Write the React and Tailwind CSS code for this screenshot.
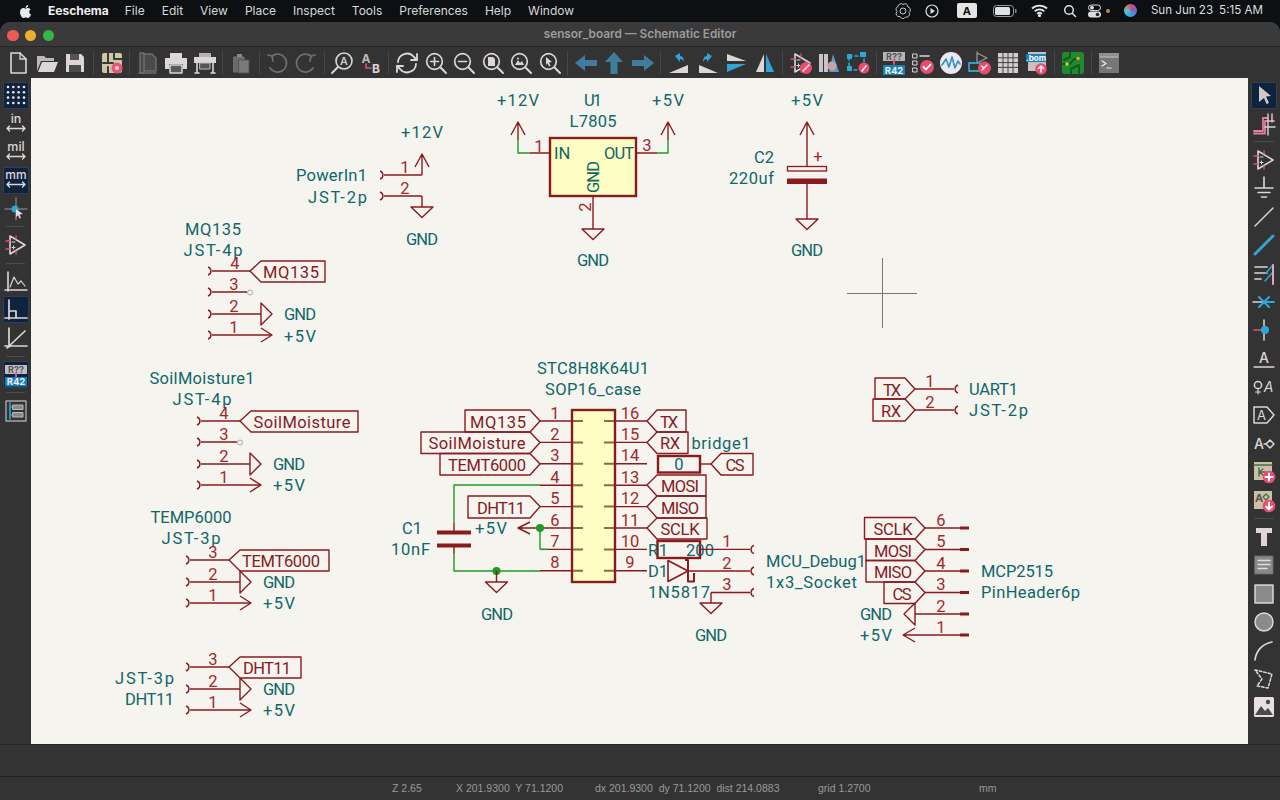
import React from 'react';
import { FaApple } from 'react-icons/fa';

const RED = '#8a1a1e', NUM = '#a3282c', TEAL = '#0f6767', GRN = '#1f9a22';
const LT = '#dcd6d9', BL = '#2fa6d6', PK = '#e84d70', GY = '#6e6e6e', ST = '#3f7c9e';

const LEN = {
  MQ135: 56, SoilMoisture: 97, TEMT6000: 78, DHT11: 48, TX: 18, RX: 20, MOSI: 38, MISO: 38, SCLK: 39, CS: 19,
  GND: 32, '+5V': 32, '+12V': 42, U1: 18, L7805: 47, OUT: 30, C1: 20, C2: 20, R1: 20, D1: 20, 200: 28,
  'JST-4p': 59, 'JST-3p': 59,
};

const P = ({ d, c = RED, w = 1.4, f = 'none' }) => <path d={d} stroke={c} strokeWidth={w} fill={f} strokeLinejoin="round" />;
const T = ({ x, y, t, a = 'middle', c = TEAL, len, rot }) => {
  const L = len || LEN[t];
  return (
    <text x={x} y={y} textAnchor={a} dominantBaseline="central" fill={c} textLength={L} lengthAdjust={L ? 'spacing' : undefined}
      transform={rot ? `rotate(${rot} ${x} ${y})` : undefined}
      className="font-['Roboto'] text-[16.5px]">{t}</text>
  );
};
const N = ({ x, y, t }) => <T x={x} y={y} t={t} c={NUM} />;
const Lb = ({ x, y, t }) => <T x={x} y={y} t={t} c="#861a1e" />;
const Gnd = ({ x, y }) => <P d={`M${x - 11} ${y}H${x + 11}L${x} ${y + 10.5}Z`} />;
const Up = ({ x, y, to }) => <P d={`M${x} ${to}V${y}M${x - 7} ${y + 13}L${x} ${y}L${x + 7} ${y + 13}`} />;
const SockL = ({ x, y, to, n, nx }) => (
  <>
    <P d={`M${x} ${y - 4}A4.2 4.2 0 0 1 ${x} ${y + 4}M${x + 4} ${y}H${to}`} />
    <N x={nx} y={y - 8} t={n} />
  </>
);
const SockR = ({ x, y, from, n, nx }) => (
  <>
    <P d={`M${x} ${y - 4}A4.2 4.2 0 0 0 ${x} ${y + 4}M${x - 4} ${y}H${from}`} />
    <N x={nx} y={y - 8} t={n} />
  </>
);
const GndR = ({ x, y }) => <P d={`M${x} ${y - 11}L${x + 11} ${y}L${x} ${y + 11}Z`} />;
const ArrR = ({ x, y }) => <P d={`M${x - 11} ${y - 7}L${x} ${y}L${x - 11} ${y + 7}`} />;

function Schematic() {
  const ys = [421, 442.4, 463.8, 485.2, 506.6, 528, 549.4, 570.8];
  const ln = ['1', '2', '3', '4', '5', '6', '7', '8'];
  const rn = ['16', '15', '14', '13', '12', '11', '10', '9'];
  return (
    <svg viewBox="31 78 1217 666" className="block w-full h-full">
      <defs>
        <pattern id="griddots" x="35" y="121" width="32" height="107" patternUnits="userSpaceOnUse">
          <rect width="1.5" height="1.5" fill="#ecebe4" />
        </pattern>
      </defs>
      <rect x="31" y="78" width="1217" height="666" fill="url(#griddots)" />

      {/* cursor */}
      <P d="M847 293.5H917M882.5 258V328" c="#777774" w={1} />

      {/* PowerIn1 */}
      <T x={367} y={175} a="end" t="PowerIn1" len={71} />
      <T x={367} y={197} a="end" t="JST-2p" len={59} />
      <SockL x={380} y={175} to={422} n="1" nx={405} />
      <SockL x={380} y={196} to={422} n="2" nx={405} />
      <Up x={422} y={154} to={175} />
      <P d="M422 196V207" />
      <Gnd x={422} y={207} />
      <T x={422} y={132} t="+12V" />
      <T x={422} y={239} t="GND" />

      {/* U1 */}
      <rect x="550" y="138" width="86" height="58" fill="#fdfdc4" stroke={RED} strokeWidth="2.4" />
      <T x={593} y={100} t="U1" />
      <T x={593} y={121} t="L7805" />
      <T x={554} y={153} a="start" t="IN" />
      <T x={634} y={153} a="end" t="OUT" />
      <T x={593} y={177} t="GND" rot={-90} />
      <P d="M530 153H550M636 153H657" />
      <P d="M530 153H518V140M657 153H668V140" c={GRN} />
      <Up x={518} y={122} to={140} />
      <Up x={668} y={122} to={140} />
      <N x={539} y={146} t="1" />
      <N x={647} y={145} t="3" />
      <T x={518} y={100} t="+12V" />
      <T x={668} y={100} t="+5V" />
      <P d="M593 196V229" />
      <T x={585} y={207} t="2" c={NUM} rot={-90} />
      <Gnd x={593} y={229} />
      <T x={593} y={260} t="GND" />

      {/* C2 */}
      <T x={807} y={100} t="+5V" />
      <Up x={807} y={122} to={166} />
      <rect x="787.5" y="166.5" width="39" height="4.5" fill="#f5f4ef" stroke={RED} strokeWidth="1.3" />
      <rect x="787" y="178.5" width="40" height="5.5" fill={RED} />
      <T x={818} y={156} t="+" c={NUM} />
      <P d="M807 184V219" />
      <Gnd x={807} y={219} />
      <T x={807} y={250} t="GND" />
      <T x={774} y={157} a="end" t="C2" />
      <T x={774} y={178} a="end" t="220uf" len={45} />

      {/* MQ135 */}
      <T x={213} y={229} t="MQ135" />
      <T x={213} y={250} t="JST-4p" />
      <SockL x={208} y={271} to={250} n="4" nx={235} />
      <SockL x={208} y={292} to={247} n="3" nx={234} />
      <circle cx="250" cy="292.5" r="2.5" fill="none" stroke="#a8a8a0" strokeWidth="1" />
      <SockL x={208} y={314} to={261} n="2" nx={234} />
      <SockL x={208} y={335} to={272} n="1" nx={234} />
      <P d="M250 271L261 261H325V282H261Z" />
      <Lb x={291} y={272} t="MQ135" />
      <GndR x={261} y={314} />
      <ArrR x={272} y={335} />
      <T x={300} y={314} t="GND" />
      <T x={300} y={336} t="+5V" />

      {/* SoilMoisture */}
      <T x={202} y={378} t="SoilMoisture1" len={105} />
      <T x={202} y={399} t="JST-4p" />
      <SockL x={197} y={421} to={240} n="4" nx={224} />
      <SockL x={197} y={442} to={237} n="3" nx={224} />
      <circle cx="240" cy="442.5" r="2.5" fill="none" stroke="#a8a8a0" strokeWidth="1" />
      <SockL x={197} y={464} to={250} n="2" nx={224} />
      <SockL x={197} y={485} to={261} n="1" nx={224} />
      <P d="M240 421L251 411H358V432H251Z" />
      <Lb x={302} y={422} t="SoilMoisture" />
      <GndR x={250} y={464} />
      <ArrR x={261} y={485} />
      <T x={289} y={464} t="GND" />
      <T x={289} y={485} t="+5V" />

      {/* TEMP6000 */}
      <T x={191} y={517} t="TEMP6000" len={81} />
      <T x={191} y={538} t="JST-3p" />
      <SockL x={186} y={560} to={229} n="3" nx={213} />
      <SockL x={186} y={582} to={240} n="2" nx={213} />
      <SockL x={186} y={603} to={251} n="1" nx={213} />
      <P d="M229 560L240 550H329V571H240Z" />
      <Lb x={281} y={561} t="TEMT6000" />
      <GndR x={240} y={582} />
      <ArrR x={251} y={603} />
      <T x={279} y={582} t="GND" />
      <T x={279} y={603} t="+5V" />

      {/* DHT11 */}
      <T x={174} y={678} a="end" t="JST-3p" />
      <T x={174} y={699} a="end" t="DHT11" len={49} />
      <SockL x={186} y={667} to={229} n="3" nx={213} />
      <SockL x={186} y={689} to={240} n="2" nx={213} />
      <SockL x={186} y={710} to={251} n="1" nx={213} />
      <P d="M229 667L240 657H301V678H240Z" />
      <Lb x={267} y={668} t="DHT11" />
      <GndR x={240} y={689} />
      <ArrR x={251} y={710} />
      <T x={279} y={689} t="GND" />
      <T x={279} y={710} t="+5V" />

      {/* MCU */}
      <T x={593} y={368} t="STC8H8K64U1" len={112} />
      <T x={593} y={389} t="SOP16_case" len={96} />
      <rect x="572" y="410" width="43" height="172" fill="#fdfdc4" stroke={RED} strokeWidth="2.4" />
      {ys.map((y, i) => (
        <g key={i}>
          <P d={`M540 ${y}H572M615 ${y}H647`} />
          <P d={`M573 ${y}H583M604 ${y}H614`} c="#8b6a45" w={2} />
          <N x={555} y={y - 8} t={ln[i]} />
          <N x={630} y={y - 8} t={rn[i]} />
        </g>
      ))}
      {/* left labels */}
      <P d="M540 421L530 410H465V432H530Z" />
      <Lb x={498} y={422} t="MQ135" />
      <P d="M540 442.5L530 432H421V453.5H530Z" />
      <Lb x={477} y={443.5} t="SoilMoisture" />
      <P d="M540 464L530 453.5H440V475H530Z" />
      <Lb x={487} y={465} t="TEMT6000" />
      <P d="M540 506.6L530 496H468V518H530Z" />
      <Lb x={501} y={508} t="DHT11" />
      {/* right labels */}
      <P d="M647 421L657 410H686V432H657Z" />
      <Lb x={669} y={422} t="TX" />
      <P d="M647 442.5L657 432H688V453.5H657Z" />
      <Lb x={670} y={443.5} t="RX" />
      <T x={721} y={443} t="bridge1" len={59} />
      <rect x="658" y="456" width="42" height="16.5" fill="none" stroke={RED} strokeWidth="2.4" />
      <T x={679} y={464.5} t="0" />
      <P d="M700 464H711" />
      <P d="M711 464L721 453.5H753V475H721Z" />
      <Lb x={735} y={465} t="CS" />
      <P d="M647 485L657 475H706V496H657Z" />
      <Lb x={680} y={486.5} t="MOSI" />
      <P d="M647 506.6L657 496H706V518H657Z" />
      <Lb x={680} y={508} t="MISO" />
      <P d="M647 528L657 518H707V539H657Z" />
      <Lb x={680} y={529} t="SCLK" />

      {/* C1 */}
      <P d="M540 485H454V523M454 554V571H540" c={GRN} />
      <P d="M454 523V532M454 545V554" />
      <P d="M437 532.5H471M437 545.5H471" w={4} />
      <T x={422} y={528} a="end" t="C1" />
      <T x={430} y={549} a="end" t="10nF" len={39} />
      <circle cx="496.5" cy="571" r="4" fill={GRN} />
      <P d="M496.5 571V582" />
      <Gnd x={496.5} y={582} />
      <T x={497} y={614} t="GND" />
      <P d="M530 522L518 528L530 534M518 528H540" />
      <P d="M540 528V549.4" c={GRN} />
      <circle cx="540" cy="528" r="4" fill={GRN} />
      <P d="M540 549.4H548" c={GRN} />
      <T x={491} y={528} t="+5V" />

      {/* R1 D1 socket */}
      <rect x="657.5" y="541" width="42.5" height="17" fill="none" stroke={RED} strokeWidth="2.4" />
      <T x={658} y={550} t="R1" />
      <T x={700} y={550} t="200" />
      <SockR x={754} y={549.4} from={700} n="1" nx={727} />
      <P d="M668 560.5V581.5L688 571Z" w={1.6} />
      <P d="M685 560H688V581.5H694V573" w={2} />
      <SockR x={754} y={571} from={688} n="2" nx={727} />
      <T x={658} y={571} t="D1" />
      <T x={679} y={592} t="1N5817" len={62} />
      <SockR x={754} y={592.5} from={711} n="3" nx={727} />
      <P d="M711 592.5V603" />
      <Gnd x={711} y={603} />
      <T x={711} y={635} t="GND" />
      <T x={766} y={561} a="start" t="MCU_Debug1" len={100} />
      <T x={766} y={582} a="start" t="1x3_Socket" len={91} />

      {/* UART */}
      <P d="M915 389L905 378H875V399H905Z" />
      <Lb x={892} y={390} t="TX" />
      <P d="M915 410L905 399H873V421H905Z" />
      <Lb x={891} y={411} t="RX" />
      <SockR x={958} y={389} from={915} n="1" nx={930} />
      <SockR x={958} y={410} from={915} n="2" nx={930} />
      <T x={969} y={389} a="start" t="UART1" len={49} />
      <T x={969} y={410} a="start" t="JST-2p" len={59} />

      {/* MCP2515 */}
      <P d="M925 528L915 517.5H864.5V539H915Z" />
      <Lb x={893} y={529.5} t="SCLK" />
      <P d="M925 549.5L915 539H866V560.5H915Z" />
      <Lb x={893} y={551} t="MOSI" />
      <P d="M925 571L915 560.5H866V582H915Z" />
      <Lb x={893} y={572.5} t="MISO" />
      <P d="M925 592.5L915 582H884V603.5H915Z" />
      <Lb x={902} y={594} t="CS" />
      <P d="M915 603L904 614L915 625Z" />
      <P d="M915 628L903 635L915 642M903 635H960" />
      <P d="M925 528H960M925 549.5H960M925 571H960M925 592.5H960M915 614H960" />
      <P d="M960 528H969M960 549.5H969M960 571H969M960 592.5H969M960 614H969M960 635H969" w={3} />
      {[['6', 520], ['5', 541], ['4', 563], ['3', 584], ['2', 606], ['1', 627]].map(([n, y]) => (
        <N key={n} x={941} y={y} t={n} />
      ))}
      <T x={876} y={614} t="GND" />
      <T x={876} y={635} t="+5V" />
      <T x={981} y={571} a="start" t="MCP2515" len={72} />
      <T x={981} y={592} a="start" t="PinHeader6p" len={99} />
    </svg>
  );
}

/* ---------- toolbar icons ---------- */
const S = ({ children, s = 24 }) => (
  <svg viewBox="0 0 24 24" width={s} height={s} fill="none" strokeLinecap="round" strokeLinejoin="round" className="overflow-visible">{children}</svg>
);
const Mag = ({ children }) => (
  <S>
    <circle cx="10.5" cy="10.5" r="7.8" stroke={LT} strokeWidth="1.7" />
    <path d="M16.3 16.3L22 22" stroke={LT} strokeWidth="2" />
    {children}
  </S>
);
const Tx = ({ x, y, t, size = 9, fill = LT, w = 700 }) => (
  <text x={x} y={y} textAnchor="middle" fill={fill} fontSize={size} fontWeight={w} fontFamily="Inter, sans-serif">{t}</text>
);
const Opamp = () => (
  <>
    <path d="M6 3V21L21 12Z" stroke={LT} strokeWidth="1.6" />
    <path d="M2 8H6M2 16H6M12 6V3M12 21V18" stroke={PK} strokeWidth="1.3" />
    <path d="M8 9h3M9.5 13v3M8 14.5h3" stroke={LT} strokeWidth="1" />
  </>
);

const top = [
  [
    <S><path d="M5 2H14L20 8V22H5Z" fill="#3b3b3b" stroke={LT} strokeWidth="1.6" /><path d="M14 2V8H20" stroke={LT} strokeWidth="1.3" /></S>,
    <S><path d="M2 20V5H9L11 7H19V10H6L2 20Z" fill="#bdb6ba" /><path d="M3 21L7 11H23L19 21Z" fill={LT} /></S>,
    <S><path d="M3 3H18L21 6V21H3Z" fill={LT} /><path d="M7 3H16V9H7Z" fill="#555" /><path d="M6 14H18V21H6Z" fill="#4a4a4a" /></S>,
  ],
  [
    <S><rect x="2" y="2" width="20" height="20" rx="2" fill="#cfc5ac" /><path d="M8 2V12H3M14 2V8H22M8 16V22M8 12H13" stroke="#3a3a34" strokeWidth="2" /><circle cx="17" cy="17" r="5.5" fill="#e8557a" /><circle cx="17" cy="17" r="2" fill="#f5d9e0" /></S>,
  ],
  [
    <S><path d="M4 2H8V22H4ZM8 3H16L20 7V20H8" stroke={GY} strokeWidth="1.5" fill="#4a4a4a" /><path d="M3 22H20" stroke={GY} strokeWidth="1.3" /></S>,
    <S><path d="M6 2H18V7H6Z" fill={LT} /><path d="M1 7H23V18H19V13H5V18H1Z" fill={LT} /><path d="M6 14H18V22H6Z" fill="#5a5a5a" stroke={LT} strokeWidth="1.5" /></S>,
    <S><path d="M6 2H18V6H6Z" fill="#b8b3b5" /><path d="M1 6H23V12H1Z" fill={LT} /><path d="M4 12V22M20 12V22M2 22H6M18 22H22" stroke={LT} strokeWidth="1.6" /><path d="M7 12H17V18H7Z" fill="#555" stroke="#bbb" /></S>,
  ],
  [
    <S><path d="M5 6H15V21H5Z" fill="#6a6a6a" stroke="#777" /><path d="M10 9H20V22H10Z" fill="#7a7a7a" stroke="#555" /><path d="M8 3H13V6H8Z" fill="#8a8a8a" /></S>,
  ],
  [
    <S><path d="M7 5A9 9 0 1 1 5 17" stroke={GY} strokeWidth="1.8" /><path d="M3 4L7 5L8 10" stroke={GY} strokeWidth="1.8" /></S>,
    <S><path d="M17 5A9 9 0 1 0 19 17" stroke={GY} strokeWidth="1.8" /><path d="M21 4L17 5L16 10" stroke={GY} strokeWidth="1.8" /></S>,
  ],
  [
    <S><circle cx="14" cy="10" r="8" stroke={LT} strokeWidth="1.6" /><path d="M8 16L2 22" stroke={LT} strokeWidth="2" /><Tx x={14} y={14} t="A" size={11} w={500} /></S>,
    <S><Tx x={7} y={12} t="A" size={12} fill="#bdb6ba" /><Tx x={17} y={22} t="B" size={12} /><path d="M7 13V17H12" stroke={PK} strokeWidth="1.7" /></S>,
  ],
  [
    <S><path d="M3 11A9 9 0 0 1 19 6L22 9M21 13A9 9 0 0 1 5 18L2 15" stroke={LT} strokeWidth="1.8" /><path d="M22 3V9H16M2 21V15H8" stroke={LT} strokeWidth="1.8" /></S>,
    <Mag><path d="M6.5 10.5H14.5M10.5 6.5V14.5" stroke={LT} strokeWidth="1.6" /></Mag>,
    <Mag><path d="M6.5 10.5H14.5" stroke={LT} strokeWidth="1.6" /></Mag>,
    <Mag><path d="M7 6H12L14 8V15H7Z" fill={LT} /></Mag>,
    <Mag><path d="M6 14L9 9L11 12L13 10L15 14Z" fill={LT} /><circle cx="9" cy="7.5" r="1" fill={LT} /></Mag>,
    <Mag><path d="M8 6L14 11L11 11.5L12.5 15L11 15.6L9.6 12.3L8 14Z" fill={LT} /></Mag>,
  ],
  [
    <S><path d="M1 12L11 4V9H23V15H11V20Z" fill={ST} /></S>,
    <S><path d="M12 1L21 11H15.5V23H8.5V11H3Z" fill={ST} /></S>,
    <S><path d="M23 12L13 4V9H1V15H13V20Z" fill={ST} /></S>,
  ],
  [
    <S><path d="M2 22L21 14V22Z" fill={LT} /><path d="M8 5L13 2V5C16 5 17 8 17 11C16 9 15 8 13 8V11Z" fill={BL} /></S>,
    <S><path d="M22 22L3 14V22Z" fill={LT} /><path d="M16 5L11 2V5C8 5 7 8 7 11C8 9 9 8 11 8V11Z" fill={BL} /></S>,
    <S><path d="M3 3L22 10H3Z" fill={LT} /><path d="M3 13H22L3 21Z" fill={BL} /></S>,
    <S><path d="M11 3L3 21H11Z" fill={LT} /><path d="M13 3L21 21H13Z" fill={BL} /></S>,
  ],
  [
    <S><Opamp /><circle cx="17" cy="17" r="6" fill={PK} /><path d="M14 20L20 14" stroke="#f6dfe5" strokeWidth="1.6" /></S>,
    <S><path d="M2 3H6V21H2ZM7 3H11V21H7Z" fill="#c9c2c6" /><path d="M12 21L16 3L22 21Z" fill="#5a9cc0" /><circle cx="15" cy="15" r="4.5" fill="#c9a0ae" /></S>,
    <S><rect x="3" y="5" width="15" height="14" stroke={BL} strokeWidth="1.6" strokeDasharray="3 3" /><rect x="1" y="3" width="5" height="5" fill={BL} /><rect x="1" y="15" width="5" height="5" fill={BL} /><rect x="14" y="1" width="6" height="5" fill={BL} /><circle cx="18" cy="17" r="5.5" fill={PK} /><path d="M16 20L20 15" stroke="#fff" strokeWidth="1.4" /></S>,
  ],
  [
    <S><rect x="1" y="1" width="22" height="9" fill="#b9b3b6" /><Tx x={12} y={8.5} t="R??" size={9} fill="#555" /><path d="M12 10V13" stroke={PK} strokeWidth="2" /><rect x="1" y="14" width="22" height="10" fill="#1b7fb0" /><Tx x={12} y={22.5} t="R42" size={9.5} fill="#e8f3f8" /></S>,
    <S><path d="M2 3h4v4H2zM2 10h4v4H2zM2 17h4v4H2z" stroke={LT} strokeWidth="1" /><path d="M9 5H18" stroke={LT} strokeWidth="1.5" /><circle cx="16" cy="16" r="7" fill={PK} /><path d="M12.5 16L15 18.5L19.5 13.5" stroke="#fff" strokeWidth="1.8" /></S>,
    <S><circle cx="12" cy="12" r="11" fill="#e9eaee" /><path d="M3 14L7 8L10 16L13 6L16 17L19 10L21 13" stroke="#3d8fc4" strokeWidth="1.7" /></S>,
    <S><path d="M9 1V12M9 2L19 7L9 12" stroke="#9a9a9a" strokeWidth="1.3" /><rect x="1" y="12" width="11" height="8" stroke={BL} strokeWidth="1.8" strokeDasharray="2 1.5" /><circle cx="16.5" cy="17" r="6.5" fill={PK} /><path d="M14 19L19 14M13.5 15L16 17" stroke="#fff" strokeWidth="1.2" /></S>,
    <S><rect x="2" y="2" width="20" height="20" fill="#d3cdd0" /><path d="M2 6.8H22M2 11.6H22M2 16.4H22M7 2V22M12 2V22M17 2V22" stroke="#444" strokeWidth="1" /></S>,
    <S><path d="M3 1H21V20H3Z" fill="#c7c1c4" /><rect x="1" y="3" width="20" height="8" fill="#1b7fb0" /><Tx x={11} y={10} t=".bom" size={8} fill="#fff" /><circle cx="16" cy="18" r="5.8" fill={PK} /><path d="M16 21V15M13.5 17.5L16 15L18.5 17.5" stroke="#fff" strokeWidth="1.5" /></S>,
  ],
  [
    <S><rect x="1" y="1" width="22" height="22" rx="3" fill="#1f8a30" /><path d="M2 13H9L13 8H16M10 23V18L18 14V23M9 1V6L3 9" stroke="#0f5c1c" strokeWidth="2" /><circle cx="6" cy="13" r="1.7" fill="#f0c040" /><circle cx="17" cy="7.5" r="1.7" fill="#f0a030" /></S>,
  ],
  [
    <S><rect x="2" y="2" width="20" height="20" fill="#777" /><rect x="2" y="2" width="20" height="3.4" fill="#8f8f8f" /><path d="M3 6H21" stroke="#ddd" strokeWidth=".8" /><path d="M5 10L9 12.5L5 15M10 17H14" stroke="#eee" strokeWidth="1.2" /></S>,
  ],
];

const Unit = ({ t }) => (
  <S>
    <Tx x={12} y={11} t={t} size={t === 'mm' ? 12 : 12.5} w={500} />
    <path d="M3 16.5H21M5.5 14L3 16.5L5.5 19M18.5 14L21 16.5L18.5 19" stroke={LT} strokeWidth="1.4" />
  </S>
);

const left = [
  [
    { sel: true, i: <S><g fill="#e8e8ee">{[4, 9.3, 14.6, 20].flatMap((y) => [4, 9.3, 14.6, 20].map((x) => <circle key={`${x}-${y}`} cx={x} cy={y} r="1.3" />))}</g></S> },
    { i: <Unit t="in" /> },
    { i: <Unit t="mil" /> },
    { sel: true, i: <Unit t="mm" /> },
    { i: <S><path d="M1 12H23M12 1V23" stroke="#9a9a9a" strokeWidth="1" /><circle cx="11" cy="12" r="3.5" fill={BL} /><path d="M12 12L19 17L15.5 17.5L17 21L15.5 21.6L14 18.2L12 20Z" fill="#e8dce2" /></S> },
  ],
  [{ i: <S><Opamp /></S> }],
  [
    { i: <S><path d="M4 2V21M1 20H23" stroke={LT} strokeWidth="1.6" /><path d="M6 17L10 7L14 14L17 11L21 16" stroke={LT} strokeWidth="1.2" /></S> },
    { sel: true, i: <S><path d="M5 2V21M1 20H23M5 13H12V20" stroke={LT} strokeWidth="1.7" /></S> },
    { i: <S><path d="M5 2V21M1 20H23M3 22L21 5" stroke={LT} strokeWidth="1.7" /></S> },
  ],
  [{ sel: true, i: <S><rect x="1" y="2" width="22" height="9" fill="#c4bcc2" /><Tx x={12} y={9.5} t="R??" size={9} fill="#555" /><path d="M12 11V14" stroke={PK} strokeWidth="2" /><rect x="1" y="14" width="22" height="9.5" fill="#1b7fb0" /><Tx x={12} y={22} t="R42" size={9.5} fill="#eef" /></S> }],
  [{ i: <S><rect x="2" y="2" width="20" height="20" stroke="#a9a5a7" strokeWidth="1.4" /><path d="M6 4V20" stroke={BL} strokeWidth="1.6" /><path d="M6 8H9M6 16H9" stroke={BL} strokeWidth="1.2" /><rect x="9" y="6" width="10" height="4.5" fill="#888" stroke="#bbb" /><rect x="9" y="13.5" width="10" height="4.5" fill="#888" stroke="#bbb" /></S> }],
];

const right = [
  [
    { sel: true, i: <S><path d="M7 3L19 13L14 13.6L17 20L14.5 21L12 15L7 19Z" fill="#cfc8cc" /></S> },
    { i: <S><path d="M2 19H11V6H15M2 21.5H13V9H22" stroke="#e27ea0" strokeWidth="1.8" /><path d="M13 15H23M16 2V23M20 2V10" stroke={LT} strokeWidth="1.4" /></S> },
  ],
  [
    { i: <S><Opamp /></S> },
    { i: <S><path d="M12 1V12M3 12H21M6 16.5H18M9.5 21H14.5" stroke={LT} strokeWidth="1.6" /></S> },
    { i: <S><path d="M3 21L21 3" stroke={LT} strokeWidth="1.5" /></S> },
    { i: <S><path d="M3 21L21 3" stroke={BL} strokeWidth="3" /></S> },
    { i: <S><path d="M3 5H15M3 11H15M3 17H9" stroke={LT} strokeWidth="1.7" /><path d="M21 3L14 11M21 10L13 19" stroke={BL} strokeWidth="1.5" /><path d="M21 3V22" stroke="#e2a5bb" strokeWidth="2" /></S> },
    { i: <S><path d="M1 12H13" stroke={LT} strokeWidth="1.5" /><path d="M7 7L17 17M17 7L7 17M14 12H22" stroke={BL} strokeWidth="2" /></S> },
    { i: <S><path d="M12 2V22" stroke={LT} strokeWidth="1.5" /><path d="M2 12H12" stroke={PK} strokeWidth="1.5" /><circle cx="13" cy="12" r="4" fill={BL} /></S> },
    { i: <S><Tx x={12} y={16} t="A" size={14} w={500} /><path d="M2 20H22" stroke={LT} strokeWidth="1.4" /></S> },
    { i: <S><circle cx="6" cy="10" r="3.6" stroke={LT} strokeWidth="1.5" /><path d="M6 14V19M3.5 17H8.5" stroke={LT} strokeWidth="1.2" /><text x="16.5" y="17" textAnchor="middle" fill={LT} fontSize="14" fontStyle="italic" fontFamily="Inter, sans-serif">A</text></S> },
    { i: <S><path d="M2 4H15L22 12L15 20H2Z" stroke={LT} strokeWidth="1.5" /><Tx x={9.5} y={17} t="A" size={13} w={400} /></S> },
    { i: <S><Tx x={7} y={17} t="A" size={14} w={500} /><path d="M14 12L18 8L22 12L18 16Z" stroke={LT} strokeWidth="1.5" /><path d="M12 12H14" stroke={LT} strokeWidth="1.5" /></S> },
    { i: <S><rect x="2" y="2" width="18" height="18" fill="#c9c0a8" /><path d="M2 5H20M7 8V16M7 12H14M11 9L7 12L11 15" stroke="#4a6a4a" strokeWidth="1.4" /><circle cx="17" cy="17" r="6.3" fill={PK} /><path d="M17 13.5V20.5M13.5 17H20.5" stroke="#fff" strokeWidth="2" /></S> },
    { i: <S><rect x="2" y="2" width="18" height="18" fill="#c9c0a8" /><Tx x={7} y={13} t="A" size={11} fill="#55554a" /><path d="M14 5L17 8L14 11L11 8Z" stroke="#4a6a4a" strokeWidth="1.3" /><circle cx="17" cy="17" r="6.3" fill={PK} /><path d="M17 13.5V20M14 17.5L17 20.5L20 17.5" stroke="#fff" strokeWidth="1.8" /></S> },
  ],
  [
    { i: <S><path d="M4 3H20V8H15V21H9V8H4Z" fill={LT} /></S> },
    { i: <S><rect x="3" y="3" width="18" height="18" fill="#888" stroke="#6b6b6b" /><path d="M6 7.5H18M6 11.5H18M6 15.5H15" stroke="#ddd" strokeWidth="1.4" /></S> },
    { i: <S><rect x="3" y="3" width="18" height="18" fill="#8a8a8a" stroke={LT} strokeWidth="1.5" /></S> },
    { i: <S><circle cx="12" cy="12" r="9" fill="#8a8a8a" stroke={LT} strokeWidth="1.5" /></S> },
    { i: <S><path d="M3 21C4 12 10 5 20 3" stroke={LT} strokeWidth="1.7" /></S> },
    { i: <S><path d="M3 3L20 7L16 21L5 19L10 12Z" stroke={LT} strokeWidth="1.5" strokeDasharray="2.5 2" /></S> },
    { i: <S><rect x="2" y="2" width="20" height="20" rx="1.5" fill="#e8dfe6" /><path d="M3 20L9 11L13 16L16 13L21 20Z" fill="#4a4a4a" /><circle cx="16" cy="7" r="2.2" fill="#4a4a4a" /></S> },
  ],
];

const VTool = ({ groups, cls, sepCls }) => (
  <div className={`flex flex-col shrink-0 bg-[#333333] pt-[3px] ${cls}`}>
    {groups.map((g, gi) => (
      <React.Fragment key={gi}>
        {gi > 0 && <div className={`h-[8px] flex items-center shrink-0 ${sepCls}`}><div className="w-full h-px bg-[#4a4a4a]" /></div>}
        {g.map((b, i) => (
          <div key={i} className="h-[28.4px] shrink-0 flex items-center justify-center">
            <div className={`w-[26px] h-[27px] flex items-center justify-center ${b.sel ? 'bg-[#10233c] border border-[#2e4056] rounded-[2px]' : ''}`}>{b.i}</div>
          </div>
        ))}
      </React.Fragment>
    ))}
  </div>
);

const menu = ['File', 'Edit', 'View', 'Place', 'Inspect', 'Tools', 'Preferences', 'Help', 'Window'];

export default function App() {
  return (
    <div className="w-[1280px] h-[800px] overflow-hidden flex flex-col bg-[#0d1012] font-['Inter',sans-serif]">
      {/* mac menu bar */}
      <div className="h-[22px] shrink-0 flex items-center text-[12px] text-[#d8d8d8]">
        <FaApple className="ml-[18px] text-[#e8e8e8] text-[15px]" />
        <span className="ml-[15px] font-bold text-[#efefef]">Eeschema</span>
        <div className="ml-[16px] flex gap-[17px]">
          {menu.map((m) => <span key={m}>{m}</span>)}
        </div>
        <div className="ml-auto flex items-center pr-[17px]">
          <svg width="16" height="16" viewBox="0 0 16 16" fill="none" stroke="#c8c8c8" strokeWidth="1"><circle cx="8" cy="8" r="3" /><path d="M8 1.5A3 3 0 0 1 13 4A3 3 0 0 1 14 9.5A3 3 0 0 1 10.5 14A3 3 0 0 1 5 13.5A3 3 0 0 1 2 8.5A3 3 0 0 1 3 3.5A3 3 0 0 1 8 1.5Z" /></svg>
          <svg className="ml-[13px]" width="16" height="16" viewBox="0 0 16 16" fill="none"><circle cx="8" cy="8" r="6" stroke="#dcdcdc" strokeWidth="1.2" /><path d="M6.5 5L11 8L6.5 11Z" fill="#dcdcdc" /></svg>
          <div className="ml-[17px] w-[20px] h-[15px] bg-[#e4e4e4] rounded-[2px] flex items-center justify-center text-[11px] font-bold text-[#111]">A</div>
          <svg className="ml-[16px]" width="24" height="12" viewBox="0 0 24 12" fill="none"><rect x=".5" y=".5" width="20" height="11" rx="3" stroke="#9a9a9a" /><rect x="2" y="2" width="15" height="8" rx="1.5" fill="#e2e2e2" /><rect x="22" y="4" width="1.5" height="4" fill="#8a8a8a" /></svg>
          <svg className="ml-[14px]" width="17" height="13" viewBox="0 0 17 13" fill="none" stroke="#e8e8e8" strokeWidth="1.8"><path d="M1 4.5A11 11 0 0 1 16 4.5M3.7 7.3A7 7 0 0 1 13.3 7.3M6.2 9.8A3.4 3.4 0 0 1 10.8 9.8" /><circle cx="8.5" cy="11.5" r=".7" fill="#e8e8e8" /></svg>
          <svg className="ml-[15px]" width="14" height="14" viewBox="0 0 14 14" fill="none" stroke="#e0e0e0" strokeWidth="1.5"><circle cx="6" cy="6" r="4.3" /><path d="M9.2 9.2L13 13" /></svg>
          <svg className="ml-[11px]" width="13" height="14" viewBox="0 0 13 14"><rect x=".5" y="1" width="12" height="5.5" rx="2.7" fill="none" stroke="#ddd" /><circle cx="4" cy="3.7" r="1.9" fill="#ddd" /><rect x="0" y="7.5" width="13" height="6" rx="3" fill="#ddd" /><circle cx="9.5" cy="10.5" r="1.8" fill="#222" /></svg>
          <div className="ml-[5px] w-[4px] h-[4px] rounded-full bg-[#c08a3e]" />
          <div className="ml-[14px] w-[13px] h-[13px] rounded-full bg-[conic-gradient(#d9506f,#7a5fd0,#39a8d8,#59c8c0,#d9506f)]" />
          <span className="ml-[14px] text-[11.6px] text-[#dedede]">Sun Jun 23</span>
          <span className="ml-[6px] text-[11.6px] text-[#dedede]">5:15 AM</span>
        </div>
      </div>

      {/* window */}
      <div className="flex-1 min-h-0 flex flex-col rounded-t-[10px] bg-[#333333] overflow-hidden">
        <div className="h-[25px] shrink-0 relative flex items-center justify-center pt-[1px] bg-[#3a3a3a] border-b border-[#262626]">
          <div className="absolute left-[7px] top-[7.5px] flex gap-[6.3px]">
            <div className="w-[11.5px] h-[11.5px] rounded-full bg-[#ec5a55]" />
            <div className="w-[11.5px] h-[11.5px] rounded-full bg-[#e9b02f]" />
            <div className="w-[11.5px] h-[11.5px] rounded-full bg-[#35b54a]" />
          </div>
          <span className="text-[11.8px] font-semibold text-[#9c9c9c]">sensor_board — Schematic Editor</span>
        </div>

        {/* top toolbar */}
        <div className="h-[31px] shrink-0 flex items-center pl-[4px] bg-[#333333]">
          {top.map((g, gi) => (
            <React.Fragment key={gi}>
              {gi > 0 && <div className="w-[7.8px] h-[24px] shrink-0 flex justify-center"><div className="w-px h-full bg-[#474747]" /></div>}
              {g.map((ic, i) => <div key={i} className="w-[28.5px] shrink-0 flex items-center justify-center">{ic}</div>)}
            </React.Fragment>
          ))}
        </div>

        {/* main */}
        <div className="h-[666px] shrink-0 flex">
          <VTool groups={left} cls="w-[31px]" sepCls="px-[6px]" />
          <div className="w-[1217px] h-full bg-[#f5f4ef] shrink-0">
            <Schematic />
          </div>
          <VTool groups={right} cls="w-[32px]" sepCls="px-[6px]" />
        </div>

        <div className="h-[32px] shrink-0 bg-[#333333] border-t border-[#262626]" />
        {/* status bar */}
        <div className="h-[24px] shrink-0 flex items-center border-t border-[#1f1f1f] bg-[#333333] text-[10.5px] text-[#9a9a9a] font-['Liberation_Sans',sans-serif] whitespace-pre">
          <span className="ml-[392px] w-[64px]">Z 2.65</span>
          <span className="w-[139px]">X 201.9300  Y 71.1200</span>
          <span className="w-[223px]">dx 201.9300  dy 71.1200  dist 214.0883</span>
          <span className="w-[161px]">grid 1.2700</span>
          <span>mm</span>
        </div>
      </div>
    </div>
  );
}
